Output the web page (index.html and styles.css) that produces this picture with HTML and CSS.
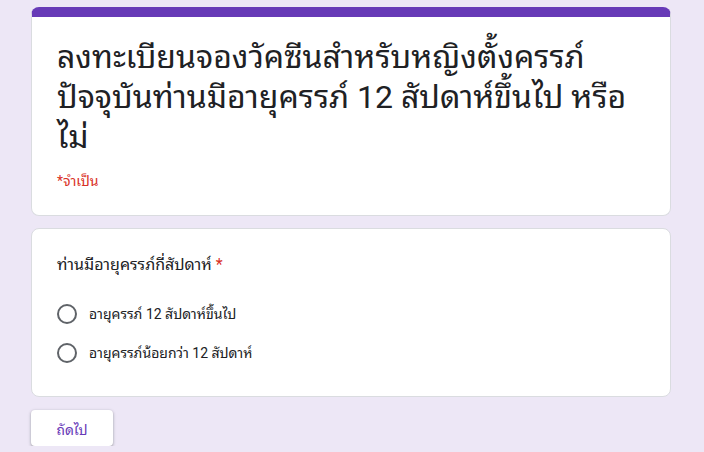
FILE: index.html
```html
<!DOCTYPE html>
<html lang="th">
<head>
<meta charset="utf-8">
<link rel="stylesheet" href="styles.css">
</head>
<body>
<main class="form">
  <section class="card header-card">
    <h1 class="title">ลงทะเบียนจองวัคซีนสำหรับหญิงตั้งครรภ์ ปัจจุบันท่านมีอายุครรภ์ 12 สัปดาห์ขึ้นไป หรือไม่</h1>
    <div class="required-note">*จำเป็น</div>
  </section>
  <section class="card question-card">
    <div class="question">ท่านมีอายุครรภ์กี่สัปดาห์ <span class="star">*</span></div>
    <div class="options">
      <label class="option"><span class="radio"></span><span class="option-text">อายุครรภ์ 12 สัปดาห์ขึ้นไป</span></label>
      <label class="option"><span class="radio"></span><span class="option-text">อายุครรภ์น้อยกว่า 12 สัปดาห์</span></label>
    </div>
  </section>
  <div class="actions">
    <button class="next">ถัดไป</button>
  </div>
</main>
</body>
</html>
```
FILE: styles.css
```css
html, body {
  margin: 0;
  padding: 0;
}
body {
  background: #ede7f6;
  font-family: Roboto, "Noto Sans Thai Looped", sans-serif;
  color: #202124;
}
.form {
  width: 640px;
  margin-left: 31px;
  padding-top: 7px;
  display: flex;
  flex-direction: column;
  gap: 12px;
}
.card {
  background: #fff;
  border: 1px solid #dadce0;
  border-radius: 8px;
  box-sizing: border-box;
}
.header-card {
  border-top: 10px solid #673ab7;
  padding: 20px 24px 24px 25px;
  height: 209px;
}
.title {
  margin: 0;
  font-size: 32px;
  line-height: 40px;
  font-weight: 400;
  color: #202124;
}
.required-note {
  margin-top: 14px;
  font-size: 14px;
  line-height: 20px;
  color: #d93025;
}
.question-card {
  padding: 24px 24px 24px 25px;
  height: 169px;
}
.question {
  font-size: 16px;
  line-height: 24px;
  color: #202124;
}
.star {
  color: #d93025;
}
.options {
  margin-top: 27px;
  display: flex;
  flex-direction: column;
  gap: 19px;
}
.option {
  display: flex;
  align-items: center;
  gap: 12px;
  font-size: 14px;
  line-height: 20px;
}
.radio {
  width: 16px;
  height: 16px;
  border: 2px solid #5f6368;
  border-radius: 50%;
  flex: none;
}
.actions {
  margin-top: 1px;
}
.next {
  font-family: inherit;
  font-size: 14px;
  color: #673ab7;
  background: #fff;
  border: none;
  border-radius: 4px;
  width: 82px;
  height: 36px;
  box-shadow: 0 1px 2px rgba(60,64,67,.3), 0 1px 3px 1px rgba(60,64,67,.15);
  padding: 0;
}
```
